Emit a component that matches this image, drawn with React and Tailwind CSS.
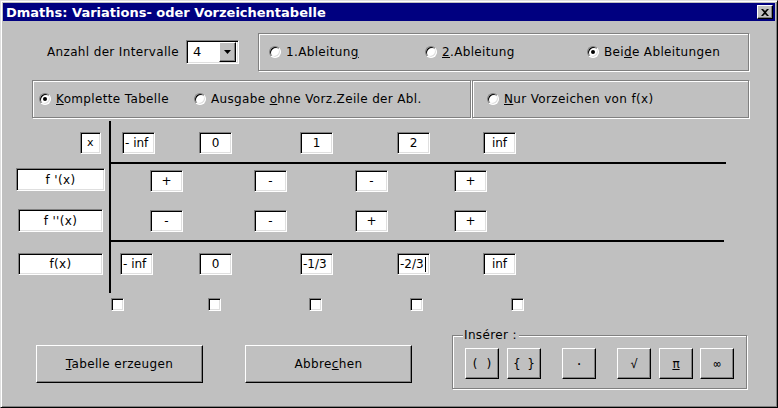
const sunken =
  "bg-white border border-t-[#808080] border-l-[#808080] border-b-white border-r-white shadow-[inset_1px_1px_0_#000,inset_-1px_-1px_0_#dfdfdf]";
const raised =
  "bg-[#c0c0c0] border border-t-white border-l-white border-b-black border-r-black shadow-[inset_-1px_-1px_0_#808080]";
const etched = "border border-[#808080] shadow-[inset_1px_1px_0_#fff,1px_1px_0_#fff]";

const Radio = ({ checked, className = "", children }) => (
  <div className={`flex items-center gap-[5px] ${className}`}>
    <div className="w-[12px] h-[12px] shrink-0 rounded-full bg-white border border-t-[#808080] border-l-[#808080] border-b-white border-r-white shadow-[inset_1px_1px_0_#000,inset_-1px_-1px_0_#dfdfdf] flex items-center justify-center">
      {checked && <div className="w-[4px] h-[4px] rounded-full bg-black" />}
    </div>
    <span className="whitespace-nowrap">{children}</span>
  </div>
);

const Cell = ({ className = "", left, children }) => (
  <div
    className={`w-[33px] h-[22px] shrink-0 flex items-center text-[12px] tracking-normal ${left ? "justify-start pl-[2px]" : "justify-center"} ${sunken} ${className}`}
  >
    {children}
  </div>
);

const Check = ({ className = "" }) => (
  <div className={`w-[13px] h-[13px] shrink-0 ${sunken} ${className}`} />
);

const InsBtn = ({ className = "", children }) => (
  <button
    className={`w-[34px] h-[31px] shrink-0 flex items-center justify-center text-[12px] tracking-normal font-['DejaVu_Sans_Mono',monospace] ${raised} ${className}`}
  >
    {children}
  </button>
);

export default function App() {
  return (
    <div className="w-[778px] h-[408px] bg-[#c0c0c0] border border-t-[#dfdfdf] border-l-[#dfdfdf] border-b-black border-r-black p-[2px] shadow-[inset_1px_1px_0_#fff,inset_-1px_-1px_0_#808080] overflow-hidden font-['DejaVu_Sans',sans-serif] text-[12px] tracking-[0.35px] text-black">
      {/* title bar */}
      <div className="h-[18px] bg-[#000080] flex items-center justify-between pl-[3px] pr-[2px]">
        <span className="text-white font-bold text-[13px] leading-none tracking-normal">
          Dmaths: Variations- oder Vorzeichentabelle
        </span>
        <div className={`w-[16px] h-[14px] flex items-center justify-center ${raised}`}>
          <svg width="8" height="7" viewBox="0 0 8 7">
            <path d="M0 0h2l2 2 2-2h2L5 3.5 8 7H6L4 5 2 7H0l3-3.5z" fill="#000" />
          </svg>
        </div>
      </div>

      {/* row 1 */}
      <div className="mt-[12px] flex items-center h-[38px]">
        <div className="ml-[44px] w-[139px] whitespace-nowrap">Anzahl der Intervalle</div>
        <div className={`w-[53px] h-[24px] flex items-center justify-between pl-[6px] pr-[2px] ${sunken}`}>
          <span className="text-[13px]">4</span>
          <div className={`w-[17px] h-[20px] flex items-center justify-center ${raised}`}>
            <svg width="7" height="4" viewBox="0 0 7 4">
              <path d="M0 0h7L3.5 4z" fill="#000" />
            </svg>
          </div>
        </div>
        <div className={`ml-[19px] w-[491px] h-[38px] flex items-center pl-[10px] ${etched}`}>
          <Radio className="w-[156px]">
            1.Ableitun<u>g</u>
          </Radio>
          <Radio className="w-[162px]">
            <u>2</u>.Ableitung
          </Radio>
          <Radio checked>
            Bei<u>d</u>e Ableitungen
          </Radio>
        </div>
      </div>

      {/* row 2 */}
      <div className="mt-[9px] flex h-[38px]">
        <div className={`ml-[29px] w-[439px] h-[38px] flex items-center pl-[6px] ${etched}`}>
          <Radio checked className="w-[155px]">
            <u>K</u>omplette Tabelle
          </Radio>
          <Radio>
            Ausgabe <u>o</u>hne Vorz.Zeile der Abl.
          </Radio>
        </div>
        <div className={`ml-[1px] w-[277px] h-[38px] flex items-center pl-[14px] ${etched}`}>
          <Radio>
            <u>N</u>ur Vorzeichen von f(x)
          </Radio>
        </div>
      </div>

      {/* table */}
      <div className="mt-[3px] flex">
        <div className="w-[106px] flex flex-col">
          <div className={`mt-[11px] ml-[77px] w-[21px] h-[22px] flex items-center justify-center text-[11px] ${sunken}`}>x</div>
          <div className={`mt-[14px] ml-[13px] w-[89px] h-[23px] flex items-center justify-center ${sunken}`}>f '(x)</div>
          <div className={`mt-[18px] ml-[15px] w-[85px] h-[23px] flex items-center justify-center ${sunken}`}>f ''(x)</div>
          <div className={`mt-[21px] ml-[15px] w-[85px] h-[22px] flex items-center justify-center ${sunken}`}>f(x)</div>
        </div>
        <div className="w-[2px] h-[172px] bg-black" />
        <div className="flex flex-col">
          <div className="mt-[11px] flex">
            <Cell left className="ml-[11px]">- inf</Cell>
            <Cell className="ml-[44px]">0</Cell>
            <Cell className="ml-[68px]">1</Cell>
            <Cell className="ml-[64px]">2</Cell>
            <Cell className="ml-[53px]">inf</Cell>
          </div>
          <div className="mt-[8px] w-[615px] h-[2px] bg-black" />
          <div className="mt-[6px] flex">
            <Cell className="ml-[39px]">+</Cell>
            <Cell className="ml-[71px]">-</Cell>
            <Cell className="ml-[68px]">-</Cell>
            <Cell className="ml-[66px]">+</Cell>
          </div>
          <div className="mt-[18px] flex">
            <Cell className="ml-[39px]">-</Cell>
            <Cell className="ml-[71px]">-</Cell>
            <Cell className="ml-[68px]">+</Cell>
            <Cell className="ml-[66px]">+</Cell>
          </div>
          <div className="mt-[8px] w-[613px] h-[2px] bg-black" />
          <div className="mt-[11px] flex">
            <Cell left className="ml-[9px]">- inf</Cell>
            <Cell className="ml-[46px]">0</Cell>
            <Cell left className="ml-[68px]">-1/3</Cell>
            <Cell left className="ml-[64px]">
              -2/3<span className="ml-px w-px h-[15px] bg-black" />
            </Cell>
            <Cell className="ml-[53px]">inf</Cell>
          </div>
        </div>
      </div>

      {/* checkboxes */}
      <div className="mt-[5px] flex">
        <Check className="ml-[108px]" />
        <Check className="ml-[84px]" />
        <Check className="ml-[88px]" />
        <Check className="ml-[88px]" />
        <Check className="ml-[88px]" />
      </div>

      {/* bottom */}
      <div className="mt-[24px] flex items-start">
        <button className={`ml-[33px] mt-[10px] w-[167px] h-[38px] flex items-center justify-center ${raised}`}>
          <span>
            <u>T</u>abelle erzeugen
          </span>
        </button>
        <button className={`ml-[42px] mt-[10px] w-[167px] h-[38px] flex items-center justify-center ${raised}`}>
          <span>
            Abbre<u>c</u>hen
          </span>
        </button>
        <div className={`relative ml-[40px] w-[295px] h-[54px] ${etched}`}>
          <span className="absolute -top-[8px] left-[10px] bg-[#c0c0c0] pl-px pr-[2px] leading-[14px]">
            Insérer :
          </span>
          <div className="mt-[12px] ml-[12px] flex">
            <InsBtn>( )</InsBtn>
            <InsBtn className="ml-[8px]">{"{ }"}</InsBtn>
            <InsBtn className="ml-[21px]">·</InsBtn>
            <InsBtn className="ml-[21px]">√</InsBtn>
            <InsBtn className="ml-[8px]">
              <u>π</u>
            </InsBtn>
            <InsBtn className="ml-[7px]">∞</InsBtn>
          </div>
        </div>
      </div>
    </div>
  );
}
